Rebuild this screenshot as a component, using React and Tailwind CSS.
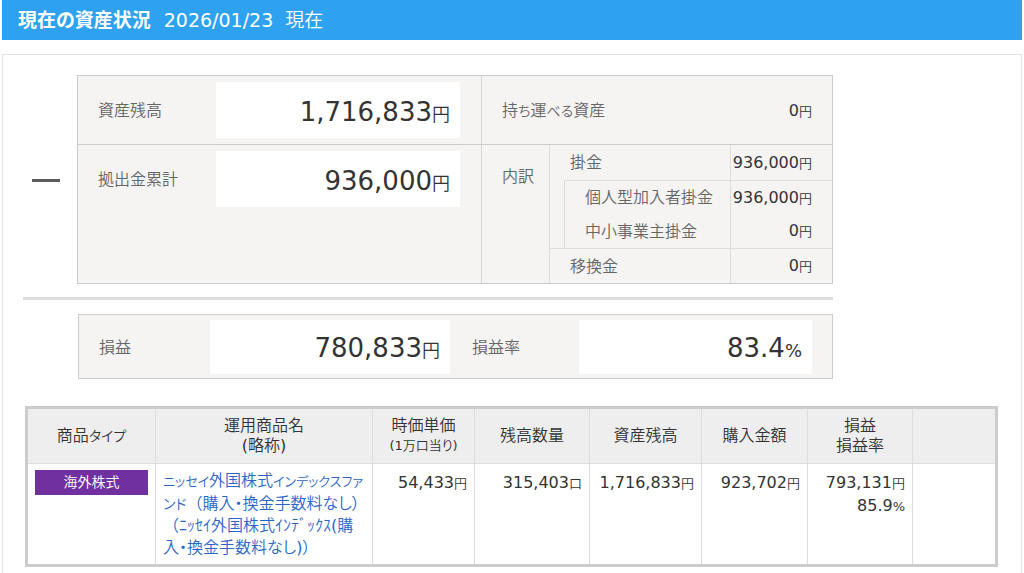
import React from 'react';

// kana are set a little smaller than the kanji around them
const Kana = ({ children }) => <span className="text-[14px]">{children}</span>;
const SmallKana = ({ children }) => <span className="text-[13px]">{children}</span>;

const holdingColumns = [
  { id: 'type', width: 'w-[129px]', lines: ['商品'], kana: 'タイプ' },
  { id: 'name', width: 'w-[217px]', lines: ['運用商品名', '(略称)'] },
  { id: 'price', width: 'w-[102px]', lines: ['時価単価'], note: '(1万口当り)' },
  { id: 'units', width: 'w-[115px]', lines: ['残高数量'] },
  { id: 'balance', width: 'w-[112px]', lines: ['資産残高'] },
  { id: 'cost', width: 'w-[106px]', lines: ['購入金額'] },
  { id: 'profit', width: 'w-[105px]', lines: ['損益', '損益率'] },
  { id: 'action', width: 'w-auto', lines: [] }
];

const Amount = ({ value, unit = '円' }) => (
  <span className="whitespace-nowrap text-[#333]">
    {value}
    <span className="text-[13px]">{unit}</span>
  </span>
);

const BigAmount = ({ value, unit = '円', className = '' }) => (
  <div className={`flex items-center justify-end bg-white pt-1.5 pr-2.5 text-[#333] ${className}`}>
    <span className="text-[26px] leading-8 whitespace-nowrap">
      {value}
      <span className="text-[18px]">{unit}</span>
    </span>
  </div>
);

const Breakdown = () => (
  <table className="w-full flex-1 border-collapse">
    <tbody>
      <tr className="h-[35px]">
        <th colSpan={2} className="border-l border-[#ddd] pt-0.5 pl-5 text-left font-normal">掛金</th>
        <td className="w-[102px] border-l border-[#ddd] pt-0.5 pr-5 text-right"><Amount value="936,000" /></td>
      </tr>
      <tr className="h-[34px]">
        <td rowSpan={2} className="w-[15px] border-l border-[#ddd]"></td>
        <th className="border-t border-l border-[#ddd] pt-0.5 pl-5 text-left font-normal">個人型加入者掛金</th>
        <td className="border-t border-l border-[#ddd] pt-0.5 pr-5 text-right"><Amount value="936,000" /></td>
      </tr>
      <tr className="h-[34px]">
        <th className="border-l border-[#ddd] pt-0.5 pl-5 text-left font-normal">中小事業主掛金</th>
        <td className="border-l border-[#ddd] pt-0.5 pr-5 text-right"><Amount value="0" /></td>
      </tr>
      <tr className="h-[35px]">
        <th colSpan={2} className="border-t border-l border-[#ddd] pt-0.5 pl-5 text-left font-normal">移換金</th>
        <td className="border-t border-l border-[#ddd] pt-0.5 pr-5 text-right"><Amount value="0" /></td>
      </tr>
    </tbody>
  </table>
);

const Summary = () => (
  <section className="flex">
    <div className="flex w-[54px] shrink-0 pt-[104px] pl-[9px]">
      <span className="h-[3px] w-7 bg-[#5a5c5a]"></span>
    </div>
    <div className="flex-1 border border-[#ccc] bg-[#f5f4f3] text-[#666]">
      <div className="flex h-[69px] border-b border-[#ccc]">
        <div className="flex flex-1 items-center pr-[21px] pl-5">
          <span className="flex-1 pt-0.5">資産残高</span>
          <BigAmount value="1,716,833" className="h-14 w-[244px]" />
        </div>
        <div className="flex w-[351px] items-center justify-between border-l border-[#d4d4d4] px-5 pt-0.5">
          <span>持<Kana>ち</Kana>運<Kana>べる</Kana>資産</span>
          <Amount value="0" />
        </div>
      </div>
      <div className="flex">
        <div className="flex flex-1 items-start pt-1.5 pr-[21px] pl-5">
          <span className="flex-1 leading-[58px]">拠出金累計</span>
          <BigAmount value="936,000" className="h-14 w-[244px]" />
        </div>
        <div className="flex w-[351px] border-l border-[#d4d4d4]">
          <span className="w-[67px] pt-5 pl-5">内訳</span>
          <Breakdown />
        </div>
      </div>
    </div>
  </section>
);

const Profit = () => (
  <section className="ml-[55px] flex h-[65px] items-center border border-[#ccc] bg-[#f5f4f3] px-5 text-[#666]">
    <span className="w-[111px] pt-0.5">損益</span>
    <BigAmount value="780,833" className="h-[54px] w-60" />
    <span className="w-[129px] pt-0.5 pl-[22px]">損益率</span>
    <BigAmount value="83.4" unit="%" className="h-[54px] flex-1" />
  </section>
);

const Holdings = () => (
  <table className="w-full table-fixed border-collapse border-[3px] border-[#ccc] text-[#333]">
    <thead>
      <tr className="h-14 bg-[#eee]">
        {holdingColumns.map(col => (
          <th key={col.id} className={`${col.width} border border-[#ddd] p-0 text-center leading-5 font-normal`}>
            {col.lines.map(line => <div key={line}>{line}{col.kana && <Kana>{col.kana}</Kana>}</div>)}
            {col.note && <div className="text-[13px]">{col.note}</div>}
          </th>
        ))}
      </tr>
    </thead>
    <tbody>
      <tr className="h-[102px] align-top leading-[22px]">
        <td className="border border-[#ddd] px-[7px] pt-1.5">
          <div className="bg-[#7030a0] text-center text-[14px] leading-[25px] text-white">海外株式</div>
        </td>
        <td className="border border-[#ddd] pt-1.5 pl-[7px] whitespace-nowrap">
          <a href="#fund" className="block text-[#2a66c8]">
            <SmallKana>ニッセイ</SmallKana>外国株式<SmallKana>インデックスファ</SmallKana><br />
            <Kana>ンド</Kana><span className="[font-feature-settings:normal]">（</span>購入・換金手数料なし）<br />
            <span className="[font-feature-settings:normal]">（</span>ﾆｯｾｲ外国株式ｲﾝﾃﾞｯｸｽ(購<br />
            入・換金手数料なし)）
          </a>
        </td>
        <td className="border border-[#ddd] pt-2 pr-[7px] text-right"><Amount value="54,433" /></td>
        <td className="border border-[#ddd] pt-2 pr-[7px] text-right"><Amount value="315,403" unit="口" /></td>
        <td className="border border-[#ddd] pt-2 pr-[7px] text-right"><Amount value="1,716,833" /></td>
        <td className="border border-[#ddd] pt-2 pr-[7px] text-right"><Amount value="923,702" /></td>
        <td className="border border-[#ddd] pt-2 pr-[7px] text-right">
          <Amount value="793,131" /><br />
          <Amount value="85.9" unit="%" />
        </td>
        <td className="border border-[#ddd]"></td>
      </tr>
    </tbody>
  </table>
);

const App = () => (
  <div className="flex min-h-screen flex-col bg-white px-0.5 font-['DejaVu_Sans','Noto_Sans_CJK_JP_DemiLight','Noto_Sans_CJK_JP',sans-serif] text-base leading-6 [font-feature-settings:'palt']" lang="ja">
    <header className="flex h-10 items-center gap-[13px] bg-[#2fa2ef] px-4 text-[19px] text-white">
      <h1 className="font-['DejaVu_Sans','Noto_Sans_CJK_JP',sans-serif] font-bold">現在の資産状況</h1>
      <p className="flex gap-3"><span>2026/01/23</span><span>現在</span></p>
    </header>
    <main className="mt-3.5 flex-1 border border-b-0 border-[#e2e2e2] pt-5">
      <div className="ml-5 max-w-[810px]">
        <Summary />
        <hr className="mt-[13px] mb-3.5 border-t-[3px] border-[#ddd]" />
        <Profit />
      </div>
      <div className="mt-[27px] mr-[23px] ml-[22px]">
        <Holdings />
      </div>
    </main>
  </div>
);

export default App;
